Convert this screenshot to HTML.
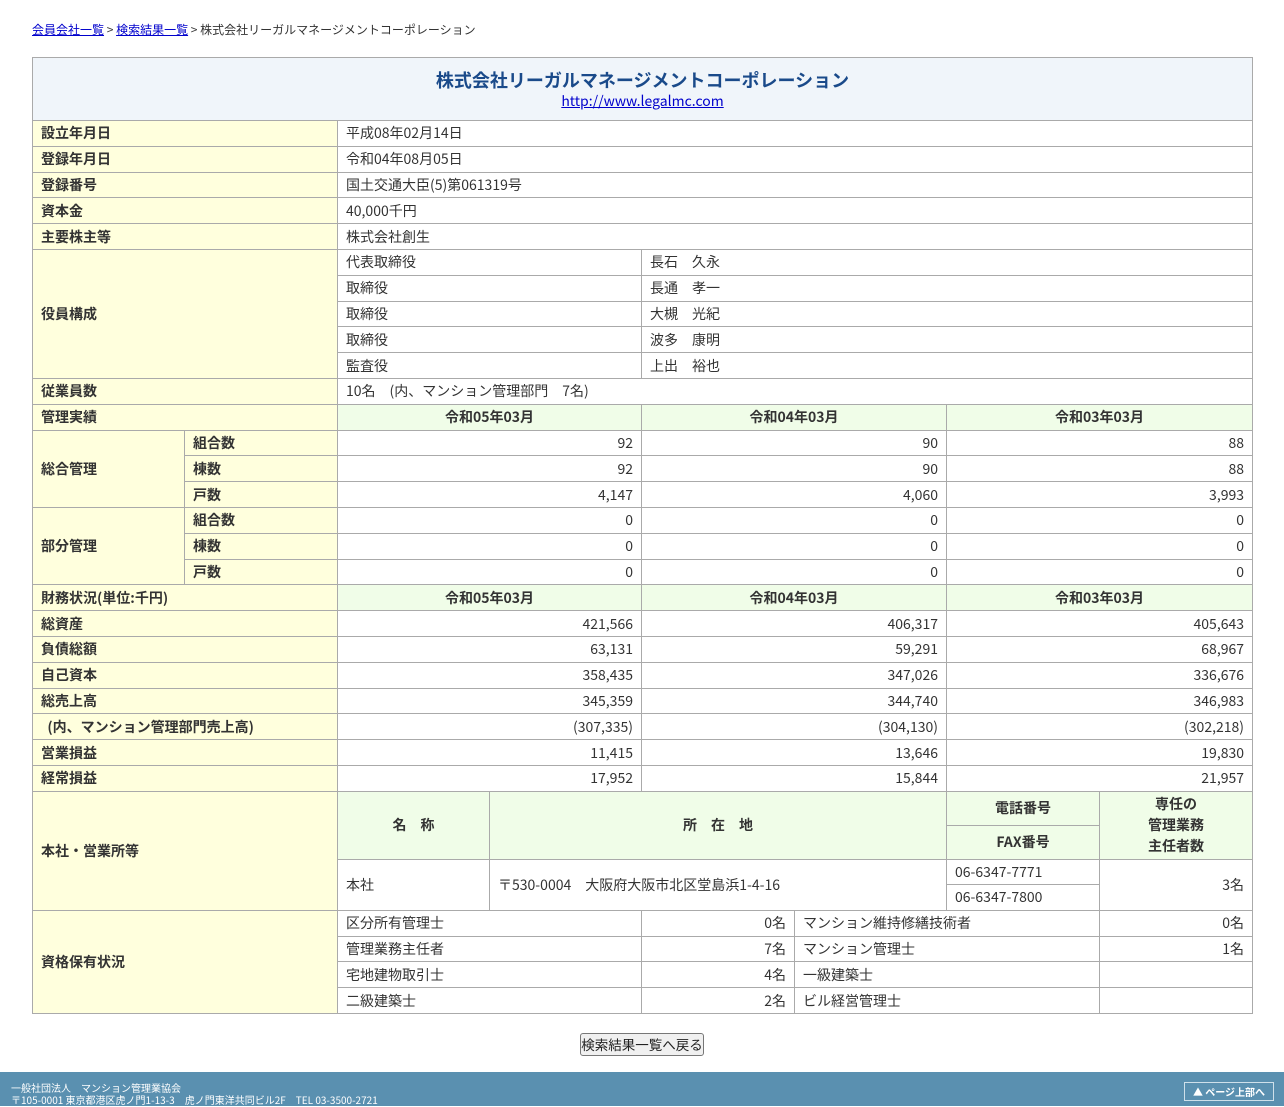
<!DOCTYPE html>
<html><head><meta charset="utf-8"><style>
body{margin:0;background:#fff;font-family:"Noto Sans CJK JP","Liberation Sans",sans-serif;color:#333;font-size:14px;}
.bc{position:absolute;left:32px;top:21px;font-size:12px;line-height:18px;}
.bc a{color:#00c;text-decoration:underline}
table{position:absolute;left:32px;top:57px;width:1220px;border-collapse:collapse;table-layout:fixed;}
td{border:1px solid #aaa;padding:0 8px;height:24.8px;line-height:16px;font-size:14px;white-space:nowrap;overflow:hidden;}
.l{background:#ffffdd;font-weight:bold;}
.h{background:#f0fde8;font-weight:bold;text-align:center;}
.r{text-align:right;}
.t{background:#f0f5fa;text-align:center;height:62px;}
.t b{color:#1a4a8a;font-size:18px;display:block;line-height:24px;}
.t a{color:#00c;font-size:14px;text-decoration:underline;line-height:18px;}
.btn{position:absolute;left:580px;top:1033px;width:122px;height:21px;border:1px solid #777;border-radius:3px;background:#f0f0f0;font-size:13.5px;text-align:center;line-height:21px;color:#222;white-space:nowrap;}
.ft{position:absolute;left:0;top:1072px;width:1284px;height:34px;background:#5a90b0;color:#fff;font-size:10px;}
.ft .a{position:absolute;left:11px;top:10px;line-height:12px;}
.ft .up{position:absolute;left:1184px;top:10px;width:88px;height:17px;border:1px solid #cfe0ea;font-size:10px;line-height:17px;text-align:center;font-weight:bold;}
</style></head><body>
<div class="bc"><a>会員会社一覧</a> &gt; <a>検索結果一覧</a> &gt; 株式会社リーガルマネージメントコーポレーション</div>
<table>
<colgroup><col style="width:152px"><col style="width:153px"><col style="width:152px"><col style="width:152px"><col style="width:153px"><col style="width:152px"><col style="width:153px"><col style="width:153px"></colgroup>
<tr><td colspan="8" class="t"><b>株式会社リーガルマネージメントコーポレーション</b><a>http://www.legalmc.com</a></td></tr>
<tr><td colspan="2" class="l">設立年月日</td><td colspan="6">平成08年02月14日</td></tr>
<tr><td colspan="2" class="l">登録年月日</td><td colspan="6">令和04年08月05日</td></tr>
<tr><td colspan="2" class="l">登録番号</td><td colspan="6">国土交通大臣(5)第061319号</td></tr>
<tr><td colspan="2" class="l">資本金</td><td colspan="6">40,000千円</td></tr>
<tr><td colspan="2" class="l">主要株主等</td><td colspan="6">株式会社創生</td></tr>
<tr><td colspan="2" rowspan="5" class="l">役員構成</td><td colspan="2">代表取締役</td><td colspan="4">長石　久永</td></tr>
<tr><td colspan="2">取締役</td><td colspan="4">長通　孝一</td></tr>
<tr><td colspan="2">取締役</td><td colspan="4">大槻　光紀</td></tr>
<tr><td colspan="2">取締役</td><td colspan="4">波多　康明</td></tr>
<tr><td colspan="2">監査役</td><td colspan="4">上出　裕也</td></tr>
<tr><td colspan="2" class="l">従業員数</td><td colspan="6">10名　(内、マンション管理部門　7名)</td></tr>
<tr><td colspan="2" class="l">管理実績</td><td colspan="2" class="h">令和05年03月</td><td colspan="2" class="h">令和04年03月</td><td colspan="2" class="h">令和03年03月</td></tr>
<tr><td rowspan="3" class="l">総合管理</td><td class="l">組合数</td><td colspan="2" class="r">92</td><td colspan="2" class="r">90</td><td colspan="2" class="r">88</td></tr>
<tr><td class="l">棟数</td><td colspan="2" class="r">92</td><td colspan="2" class="r">90</td><td colspan="2" class="r">88</td></tr>
<tr><td class="l">戸数</td><td colspan="2" class="r">4,147</td><td colspan="2" class="r">4,060</td><td colspan="2" class="r">3,993</td></tr>
<tr><td rowspan="3" class="l">部分管理</td><td class="l">組合数</td><td colspan="2" class="r">0</td><td colspan="2" class="r">0</td><td colspan="2" class="r">0</td></tr>
<tr><td class="l">棟数</td><td colspan="2" class="r">0</td><td colspan="2" class="r">0</td><td colspan="2" class="r">0</td></tr>
<tr><td class="l">戸数</td><td colspan="2" class="r">0</td><td colspan="2" class="r">0</td><td colspan="2" class="r">0</td></tr>
<tr><td colspan="2" class="l">財務状況(単位:千円)</td><td colspan="2" class="h">令和05年03月</td><td colspan="2" class="h">令和04年03月</td><td colspan="2" class="h">令和03年03月</td></tr>
<tr><td colspan="2" class="l">総資産</td><td colspan="2" class="r">421,566</td><td colspan="2" class="r">406,317</td><td colspan="2" class="r">405,643</td></tr>
<tr><td colspan="2" class="l">負債総額</td><td colspan="2" class="r">63,131</td><td colspan="2" class="r">59,291</td><td colspan="2" class="r">68,967</td></tr>
<tr><td colspan="2" class="l">自己資本</td><td colspan="2" class="r">358,435</td><td colspan="2" class="r">347,026</td><td colspan="2" class="r">336,676</td></tr>
<tr><td colspan="2" class="l">総売上高</td><td colspan="2" class="r">345,359</td><td colspan="2" class="r">344,740</td><td colspan="2" class="r">346,983</td></tr>
<tr><td colspan="2" class="l">&nbsp;&nbsp;(内、マンション管理部門売上高)</td><td colspan="2" class="r">(307,335)</td><td colspan="2" class="r">(304,130)</td><td colspan="2" class="r">(302,218)</td></tr>
<tr><td colspan="2" class="l">営業損益</td><td colspan="2" class="r">11,415</td><td colspan="2" class="r">13,646</td><td colspan="2" class="r">19,830</td></tr>
<tr><td colspan="2" class="l">経常損益</td><td colspan="2" class="r">17,952</td><td colspan="2" class="r">15,844</td><td colspan="2" class="r">21,957</td></tr>
<tr><td colspan="2" rowspan="4" class="l">本社・営業所等</td><td rowspan="2" class="h">名　称</td><td rowspan="2" colspan="3" class="h">所　在　地</td><td class="h" style="height:33px">電話番号</td><td rowspan="2" class="h" style="white-space:normal;line-height:21px">専任の<br>管理業務<br>主任者数</td></tr>
<tr><td class="h" style="height:33px">FAX番号</td></tr>
<tr><td rowspan="2">本社</td><td rowspan="2" colspan="3">〒530-0004　大阪府大阪市北区堂島浜1-4-16</td><td style="height:24.5px">06-6347-7771</td><td rowspan="2" class="r">3名</td></tr>
<tr><td style="height:24.5px">06-6347-7800</td></tr>
<tr><td colspan="2" rowspan="4" class="l">資格保有状況</td><td colspan="2">区分所有管理士</td><td class="r">0名</td><td colspan="2">マンション維持修繕技術者</td><td class="r">0名</td></tr>
<tr><td colspan="2">管理業務主任者</td><td class="r">7名</td><td colspan="2">マンション管理士</td><td class="r">1名</td></tr>
<tr><td colspan="2">宅地建物取引士</td><td class="r">4名</td><td colspan="2">一級建築士</td><td class="r"></td></tr>
<tr><td colspan="2">二級建築士</td><td class="r">2名</td><td colspan="2">ビル経営管理士</td><td class="r"></td></tr>
</table>
<div class="btn">検索結果一覧へ戻る</div>
<div class="ft"><div class="a">一般社団法人　マンション管理業協会<br>〒105-0001 東京都港区虎ノ門1-13-3　虎ノ門東洋共同ビル2F　TEL 03-3500-2721</div><div class="up">▲ ページ上部へ</div></div>
</body></html>
